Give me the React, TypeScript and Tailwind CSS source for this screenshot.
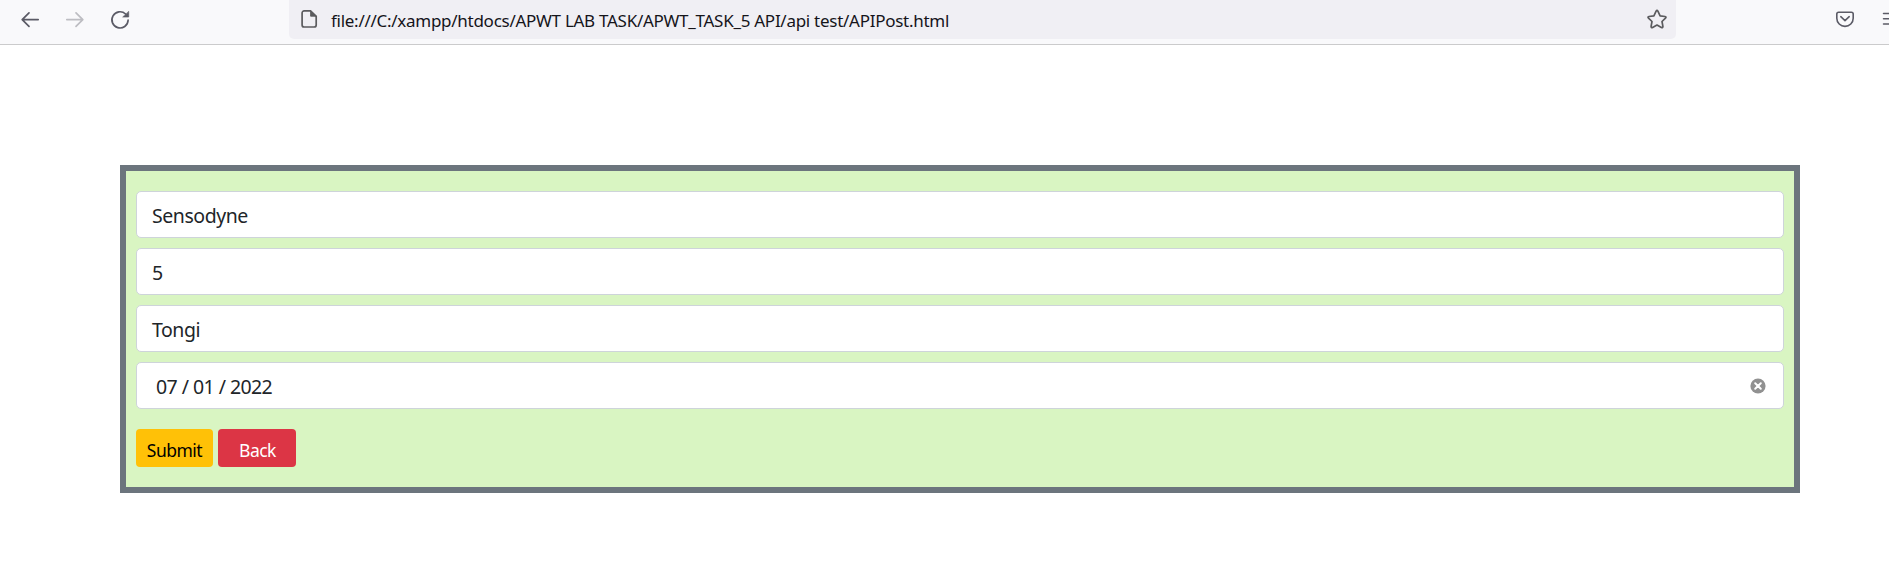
import React from "react";

const iconProps = {
  fill: "none",
  stroke: "currentColor",
  strokeLinecap: "round" as const,
  strokeLinejoin: "round" as const,
};

function Toolbar() {
  return (
    <header className="flex h-[45px] items-start overflow-hidden border-b border-[#cbcbcc] bg-[#f9f9fb] text-[#5b5b66]">
      <svg className="ml-5 mt-[9px] shrink-0" width="20" height="20" viewBox="0 0 20 20" strokeWidth="1.7" {...iconProps}>
        <path d="M18.2 10.6H2.3M9 3.8L2.2 10.6L9 17.4" />
      </svg>
      <svg className="ml-[25px] mt-[9px] shrink-0 text-[#bdbdc2]" width="20" height="20" viewBox="0 0 20 20" strokeWidth="1.7" {...iconProps}>
        <path d="M1.8 10.6H17.7M11 3.8L17.8 10.6L11 17.4" />
      </svg>
      <svg className="ml-[25px] mt-[9px] shrink-0" width="20" height="22" viewBox="0 0 20 22" strokeWidth="1.7" {...iconProps}>
        <path d="M15.6 5A8.1 8.1 0 1 0 18.1 11.2" />
        <path d="M18.7 2.7V8H13.1Z" fill="currentColor" strokeWidth="0.7" />
      </svg>
      <div className="ml-[159px] flex h-[39px] w-[1387px] shrink-0 items-start rounded-b-[5px] bg-[#f0eff4] text-[#5b5b5e]">
        <svg className="ml-[11px] mt-[9px] shrink-0" width="18" height="20" viewBox="0 0 18 20" strokeWidth="1.7" {...iconProps}>
          <path d="M10.5 1.9H4.1A2 2 0 0 0 2.1 3.9V16A2 2 0 0 0 4.1 18H14.2A2 2 0 0 0 16.2 16V7.3Z" />
          <path d="M10.6 2V7.2H16.1Z" fill="currentColor" strokeWidth="0.9" />
        </svg>
        <span className="ml-[13px] mt-[9px] whitespace-pre font-['Noto_Sans',sans-serif] text-[17px] leading-6 tracking-[-0.275px] text-[#15141a]">file:///C:/xampp/htdocs/APWT LAB TASK/APWT_TASK_5 API/api test/APIPost.html</span>
        <svg className="ml-auto mr-[8px] mt-[9px] shrink-0" width="22" height="20" viewBox="0 0 22 20" strokeWidth="1.7" {...iconProps}>
          <path d="M10.1 2.2Q11 .7 11.9 2.2L14.1 6.8L19 7.5Q20.7 7.9 19.5 9.1L16 12.5L16.9 17.4Q16.9 19 15.4 18.4L11 16L6.6 18.4Q5.1 19 5.1 17.4L6 12.5L2.5 9.1Q1.3 7.9 3 7.5L7.9 6.8Z" />
        </svg>
      </div>
      <svg className="ml-[159px] mt-[10px] shrink-0" width="20" height="18" viewBox="0 0 20 18" strokeWidth="1.6" {...iconProps}>
        <path d="M3.6 2.2H16.4Q18.2 2.2 18.2 4V8.2A8.2 8.2 0 0 1 1.8 8.2V4Q1.8 2.2 3.6 2.2Z" />
        <path d="M5.8 6.7L10 10.6L14.2 6.7" />
      </svg>
      <svg className="ml-[27px] mt-[10px] shrink-0" width="20" height="18" viewBox="0 0 20 18" strokeWidth="1.5" {...iconProps}>
        <path d="M1.5 3.4H18M1.5 8.7H18M1.5 14.1H18" />
      </svg>
    </header>
  );
}

const fieldClass =
  "flex h-[47px] w-full items-center rounded-[5px] border border-[#ced4da] bg-white px-[15px] text-[19.5px] leading-[30px] text-[#212529]";

export default function App() {
  return (
    <div className="min-h-[566px] w-full overflow-hidden bg-white font-['Noto_Sans',sans-serif]">
      <Toolbar />
      <main className="ml-[120px] mt-[120px] h-[328px] w-[1680px] border-[6px] border-[#6c757d] bg-[#d9f5c2] px-[10px] pt-5">
        <div className="flex flex-col gap-[10px]">
          <div className={fieldClass}>
            <span className="mt-[3px] tracking-[-0.45px]">Sensodyne</span>
          </div>
          <div className={fieldClass}>
            <span className="mt-[3px] tracking-[-0.45px]">5</span>
          </div>
          <div className={fieldClass}>
            <span className="mt-[3px] tracking-[-0.45px]">Tongi</span>
          </div>
          <div className={fieldClass}>
            <span className="ml-1 mt-[3px] flex gap-[4.6px] tracking-[-0.6px]">
              <span>07</span>
              <span>/</span>
              <span>01</span>
              <span>/</span>
              <span>2022</span>
            </span>
            <svg className="ml-auto mr-[2px] mt-px" width="16" height="16" viewBox="0 0 16 16">
              <circle cx="8" cy="8" r="7.6" fill="#919191" />
              <path d="M5.2 5.2L10.8 10.8M10.8 5.2L5.2 10.8" stroke="#fff" strokeWidth="2" strokeLinecap="round" />
            </svg>
          </div>
        </div>
        <div className="mt-5 flex gap-[5px] text-[17.5px] leading-[26px] tracking-[-0.5px]">
          <button className="h-[38px] w-[77px] whitespace-nowrap rounded-[4px] bg-[#ffc107] pt-[3px] text-black">Submit</button>
          <button className="h-[38px] w-[78px] whitespace-nowrap rounded-[4px] bg-[#dc3545] pl-px pt-[3px] text-white">Back</button>
        </div>
      </main>
    </div>
  );
}
